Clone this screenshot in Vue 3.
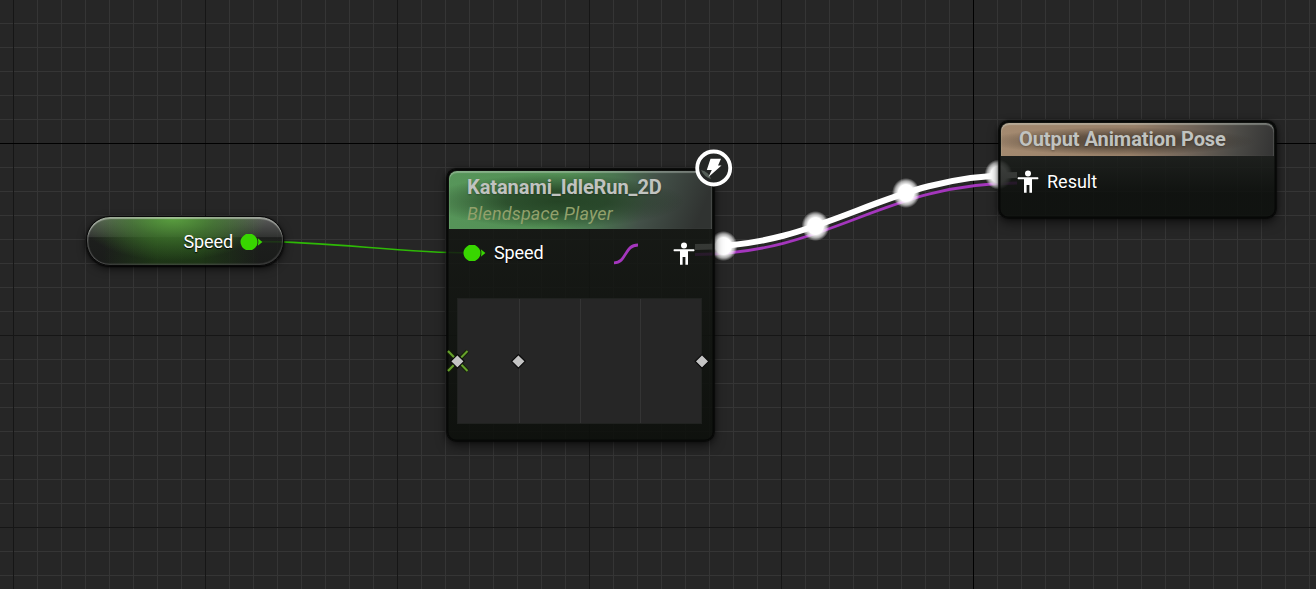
<script setup>
const minorX = Array.from({ length: 55 }, (_, i) => 13 + i * 24)
const minorY = Array.from({ length: 24 }, (_, i) => 23 + i * 24)
const majorX = [13, 205, 397, 589, 781]
const majorY = [335, 527]
const bubbles = [[723.5, 246], [815.5, 226], [906, 193], [998.5, 174.5]]
const samples = [457.4, 518.4, 702]
</script>

<template>
  <main class="graph">
    <svg class="layer" width="1316" height="589">
      <defs>
        <radialGradient id="bubble">
          <stop offset="0" stop-color="#fff" />
          <stop offset=".56" stop-color="#fff" />
          <stop offset=".8" stop-color="#fff" stop-opacity=".6" />
          <stop offset=".95" stop-color="#fff" stop-opacity=".15" />
          <stop offset="1" stop-color="#fff" stop-opacity="0" />
        </radialGradient>
      </defs>
      <g shape-rendering="crispEdges">
        <rect v-for="x in minorX" :key="'x' + x" :x="x" y="0" width="1" height="589" fill="#353535" />
        <rect v-for="y in minorY" :key="'y' + y" x="0" :y="y" width="1316" height="1" fill="#353535" />
        <rect v-for="x in majorX" :key="'mx' + x" :x="x" y="0" width="1" height="589" fill="#161616" />
        <rect v-for="y in majorY" :key="'my' + y" x="0" :y="y" width="1316" height="1" fill="#161616" />
        <rect x="973" y="0" width="1" height="589" fill="#000" />
        <rect x="0" y="143" width="1316" height="1" fill="#000" />
      </g>
      <g fill="none">
        <path d="M262 241.6 C331 241.6 401 253 470 253" stroke="#2eb906" stroke-width="1.6" />
        <path d="M695 254.5 C830 254.5 882 183 1017 183" stroke="#a436bd" stroke-width="2.8" />
        <path d="M695 247 C830 247 882 175 1017 175" stroke="#fff" stroke-width="6" />
      </g>
      <rect v-for="b in bubbles" :key="b[0]" :x="b[0] - 14" :y="b[1] - 15" width="28" height="30" fill="url(#bubble)" />
    </svg>

    <section class="node variable">
      <span class="label">Speed</span>
      <svg class="pin" width="24" height="18" viewBox="0 0 24 18">
        <path d="M6 1H12Q17.5 4 17.5 9Q17.5 14 12 17H6Q.5 14 .5 9Q.5 4 6 1Z" fill="#38d600" />
        <path d="M17.8 5.2L22.4 9L17.8 12.8Q19 9 17.8 5.2Z" fill="#38d600" />
      </svg>
    </section>

    <section class="node blend">
      <header class="head green">
        <h1>Katanami_IdleRun_2D</h1>
        <p>Blendspace Player</p>
      </header>
      <div class="pins">
        <svg class="pin" width="24" height="18" viewBox="0 0 24 18">
          <path d="M6 1H12Q17.5 4 17.5 9Q17.5 14 12 17H6Q.5 14 .5 9Q.5 4 6 1Z" fill="#38d600" />
          <path d="M17.8 5.2L22.4 9L17.8 12.8Q19 9 17.8 5.2Z" fill="#38d600" />
        </svg>
        <span class="label">Speed</span>
        <svg class="curve" width="26" height="24" viewBox="0 0 26 24">
          <path d="M1 20.8C14 20.8 11 3 25 3" fill="none" stroke="#a436bd" stroke-width="2.8" />
        </svg>
        <svg class="pose" width="22" height="24" viewBox="0 0 22 24">
          <circle cx="11" cy="3.4" r="3" fill="#fff" />
          <path d="M1 7.3H21Q22 8.2 21 9.2H15V22.8H12.4V15H9.6V22.8H7V9.2H1Q0 8.2 1 7.3Z" fill="#fff" />
        </svg>
      </div>
      <div class="plot"><i></i><i></i><i></i><i></i></div>
    </section>

    <section class="node output">
      <header class="head tan"><h1>Output Animation Pose</h1></header>
      <div class="pins">
        <svg class="pose" width="22" height="24" viewBox="0 0 22 24">
          <circle cx="11" cy="3.4" r="3" fill="#fff" />
          <path d="M1 7.3H21Q22 8.2 21 9.2H15V22.8H12.4V15H9.6V22.8H7V9.2H1Q0 8.2 1 7.3Z" fill="#fff" />
        </svg>
        <span class="label">Result</span>
      </div>
    </section>

    <svg class="layer" width="1316" height="589">
      <circle cx="713.7" cy="168" r="16.5" fill="#242625" stroke="#fff" stroke-width="3.8" />
      <path d="M701 170Q709 172 711 179Q704 177 701 170Z" fill="#68736b" opacity=".7" />
      <path d="M710.5 158.8H721L718 165.4H721.5L708.5 177L711.8 170H706.8Z" fill="#fff" />
      <path d="M448 351L467.5 371M467.5 351L448 371" stroke="#172309" stroke-width="4" />
      <path d="M448 351L467.5 371M467.5 351L448 371" stroke="#66a12c" stroke-width="2" />
      <path
        v-for="x in samples" :key="x"
        :d="`M${x} 354.5L${x + 6.8} 361.3L${x} 368.1L${x - 6.8} 361.3Z`"
        fill="#c4c4c4" stroke="#0c0c0c" stroke-width="1.2"
      />
    </svg>
  </main>
</template>

<style>
body { background: #262626; overflow: hidden; }
</style>

<style scoped>
.graph {
  position: relative;
  width: 1316px;
  height: 589px;
  overflow: hidden;
  background: #262626;
  font-family: Roboto, "Liberation Sans", sans-serif;
}
.layer { position: absolute; left: 0; top: 0; display: block; }
.node { position: absolute; box-sizing: border-box; }
svg { display: block; flex: none; }
.label { color: #fff; font-size: 18px; line-height: 22px; letter-spacing: -.1px; text-shadow: 0 1px 1px #000; }

.variable {
  left: 86px; top: 216px; width: 198px; height: 50px;
  display: flex; align-items: center; justify-content: flex-end;
  padding: 1px 20px 0 0;
  border: 1.5px solid #080808;
  border-radius: 24px;
  background:
    radial-gradient(ellipse 95px 44px at 44% 0, rgba(98, 180, 66, .8), rgba(80, 150, 55, .5) 45%, transparent),
    linear-gradient(90deg, transparent 8%, rgba(32, 78, 18, .5) 35%, rgba(32, 78, 18, .5) 58%, transparent 88%),
    linear-gradient(rgba(104, 104, 104, .8), rgba(52, 54, 52, .85) 41%, rgba(27, 29, 27, .85) 43%, rgba(24, 26, 24, .85));
  box-shadow: inset 0 2px 1px rgba(215, 220, 212, .55), inset 1.5px 0 1px rgba(160, 160, 160, .35), inset -1px -1.5px 1px rgba(90, 90, 90, .45), 0 3px 8px rgba(0, 0, 0, .6), 0 1px 2px #000;
}
.variable .pin { margin-left: 7px; margin-right: -1px; }

.blend, .output {
  padding: 2px;
  border-radius: 9px;
  background: linear-gradient(rgba(22, 25, 21, .84), rgba(12, 15, 11, .89));
  box-shadow: inset 0 0 0 1.5px #070807, 0 0 0 .7px #070807, 0 5px 11px rgba(0, 0, 0, .55), 0 0 4px rgba(0, 0, 0, .7);
}
.blend { left: 447px; top: 169px; width: 267px; height: 272px; }
.output { left: 999px; top: 121px; width: 277px; height: 97px; background: linear-gradient(rgba(28, 31, 28, .84) 35%, rgba(13, 16, 13, .87) 75%); }
.head {
  box-sizing: border-box;
  padding: 4px 18px 0;
  border-radius: 8px 8px 0 0;
  box-shadow: inset 0 2px 1px rgba(215, 225, 215, .36), inset 1px 0 1px rgba(200, 220, 200, .12), inset -1px 0 1px rgba(150, 150, 150, .2);
}
.green {
  height: 58px;
  background:
    radial-gradient(ellipse 128px 27px at 41% 52%, rgba(26, 50, 26, .8), rgba(26, 50, 26, .68) 40%, rgba(26, 50, 26, .25) 78%, transparent),
    linear-gradient(112deg, #57965a 0%, #528d54 42%, #4a7650 58%, #435048 74%, #303331 94%);
}
.tan {
  height: 33px;
  padding-top: 4px;
  background:
    radial-gradient(ellipse 135px 14px at 44% 55%, rgba(48, 40, 32, .68), rgba(48, 40, 32, .52) 45%, rgba(48, 40, 32, .2) 80%, transparent),
    linear-gradient(102deg, #a48a70 0%, #988069 48%, #73665a 68%, #4b4a46 86%, #333 100%);
}
h1 {
  margin: 0;
  color: #c1c3c0;
  font-size: 20px;
  line-height: 24px;
  font-weight: 700;
  letter-spacing: -.07px;
  white-space: nowrap;
  text-shadow: 0 1px 2px rgba(0, 0, 0, .25);
}
p { margin: 4px 0 0; color: #92a16c; font-size: 18px; line-height: 22px; letter-spacing: .17px; font-style: italic; }
.pins { display: flex; align-items: center; height: 48px; }
.blend .pins { padding-left: 14px; }
.blend .pins .label { margin-left: 7px; width: 119px; }
.blend .pose { margin-left: 34px; margin-top: 2px; }
.blend .curve { margin-top: 2px; }
.output .pins { height: 51px; padding-left: 16px; }
.output .pose { margin-top: 1px; margin-right: 8px; }
.output .label { letter-spacing: 0; }
.plot {
  display: grid;
  grid-template-columns: repeat(4, 1fr);
  margin: 22px 11px 0 9px;
  height: 124px;
  background: #262626;
  box-shadow: 0 0 0 1px #202220;
}
.plot i + i { border-left: 1.5px solid #343434; }
</style>
